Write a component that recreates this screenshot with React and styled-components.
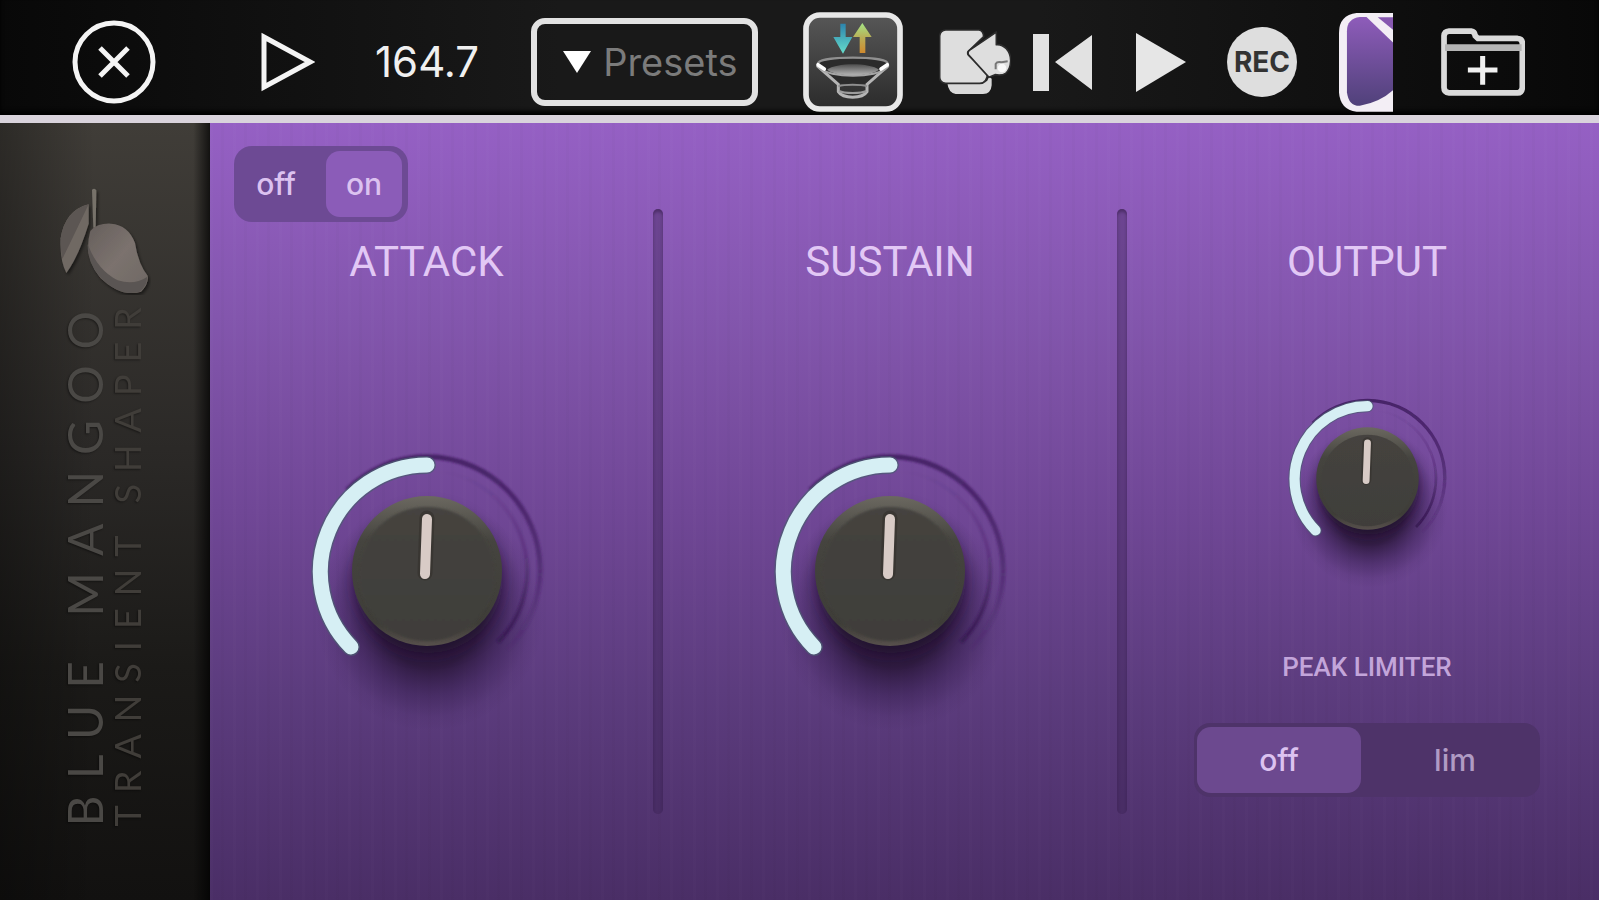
import { useState } from 'react';
import styled, { createGlobalStyle } from 'styled-components';

const CloseIcon = () => (
  <svg width="86" height="86" viewBox="0 0 86 86" fill="none" stroke="#f4f4f4" aria-hidden="true">
    <circle cx="43" cy="43" r="39" strokeWidth="5" />
    <path d="M29 29 57 57M57 29 29 57" strokeWidth="5" />
  </svg>
);

const PlayOutlineIcon = () => (
  <svg width="54" height="60" viewBox="0 0 54 60" fill="none" aria-hidden="true">
    <path d="M3 5 49 30 3 55Z" stroke="#f4f4f4" strokeWidth="5" />
  </svg>
);

const FunnelIcon = () => (
  <svg width="100" height="100" viewBox="912 35 300 300" fill="none" aria-hidden="true">
    <defs>
      <linearGradient id="tile" x1="0" y1="0" x2="0" y2="1">
        <stop offset="0" stopColor="#575757" />
        <stop offset="1" stopColor="#2b2b2b" />
      </linearGradient>
      <linearGradient id="down" x1="0" y1="0" x2="0" y2="1">
        <stop offset="0" stopColor="#2c84ad" />
        <stop offset="1" stopColor="#66dccb" />
      </linearGradient>
      <linearGradient id="up" x1="0" y1="0" x2="0" y2="1">
        <stop offset="0" stopColor="#a5e585" />
        <stop offset="0.5" stopColor="#b9ad55" />
        <stop offset="1" stopColor="#d08a2e" />
      </linearGradient>
      <linearGradient id="bowl" x1="0" y1="0" x2="0" y2="1">
        <stop offset="0" stopColor="#4d4d4d" />
        <stop offset="1" stopColor="#b4b4b4" />
      </linearGradient>
    </defs>
    <rect x="921" y="44" width="282" height="282" rx="42" fill="url(#tile)" stroke="#e8e8e8" strokeWidth="17" />
    <path d="M1024 70h16v40h20l-28 50-29-50h21Z" fill="url(#down)" />
    <path d="M1082 158h17v-48h19l-28-42-28 42h20Z" fill="url(#up)" />
    <path d="M957 194C945 168 1178 168 1166 194L1108 250H1016Z" fill="#2b2b2b" />
    <path d="M957 190C957 166 1166 166 1166 190" stroke="#909090" strokeWidth="7" />
    <path d="M984 208C1010 186 1114 186 1140 208C1116 230 1008 230 984 208Z" fill="url(#bowl)" />
    <path d="M954 196 1018 252V274C1032 296 1090 296 1104 274V252L1168 196" stroke="#b5b5b5" strokeWidth="9" />
    <path d="M960 202C990 234 1134 234 1164 202" stroke="#a6a6a6" strokeWidth="6" />
    <path d="M1018 258C1036 252 1086 252 1104 258" stroke="#8f8f8f" strokeWidth="6" />
    <path d="M1020 272C1036 280 1086 280 1102 272" stroke="#9c9c9c" strokeWidth="6" />
    <path d="M957 193 976 206M1165 193 1146 206" stroke="#fff" strokeWidth="11" strokeLinecap="round" />
  </svg>
);

const PluginIcon = () => (
  <svg width="72" height="66" viewBox="118 94 216 196" aria-hidden="true">
    <path d="M143 250H262L268 236 276 242V262Q274 288 250 288H168Q146 284 143 255Z" fill="#d9d9d9" />
    <path
      d="M138 96H238Q251 98 252 116L206 160Q202 165 206 171L264 226Q262 256 240 256H138Q120 254 120 238V114Q122 97 138 96Z"
      fill="#dedede"
      stroke="#2c2c2c"
      strokeWidth="5"
    />
    <path
      d="M290 102V140Q306 138 320 152Q334 168 333 190Q332 214 318 226Q306 234 286 230L268 238 208 172Q202 165 208 158Z"
      fill="#dedede"
      stroke="#2c2c2c"
      strokeWidth="5"
      strokeLinejoin="round"
    />
    <path d="M288 214V198Q292 190 306 193L324 190" fill="none" stroke="#777" strokeWidth="6" />
    <circle cx="307" cy="210" r="13" fill="#f8f8f8" />
  </svg>
);

const RewindIcon = () => (
  <svg width="60" height="60" viewBox="0 0 60 60" fill="#e2e2e2" aria-hidden="true">
    <path d="M0 2H16V59H0ZM59 3V58L22 30Z" />
  </svg>
);

const PlayIcon = () => (
  <svg width="52" height="60" viewBox="0 0 52 60" fill="#e6e6e6" aria-hidden="true">
    <path d="M1 1 51 30 1 60Z" />
  </svg>
);

const PluginSlotIcon = () => (
  <svg width="54" height="100" viewBox="417 35 163 300" aria-hidden="true">
    <defs>
      <linearGradient id="slot" x1="0" y1="0" x2="0" y2="1">
        <stop offset="0" stopColor="#8e5cba" />
        <stop offset="1" stopColor="#50417a" />
      </linearGradient>
    </defs>
    <path d="M580 37H470Q417 44 417 96V276Q420 328 470 335H580Z" fill="#f3eef5" />
    <path d="M480 49Q441 54 441 92V276Q446 318 480 317Q540 306 580 270V126L500 49Z" fill="url(#slot)" />
    <path d="M534 50H580V88Z" fill="#8758b0" />
  </svg>
);

const FolderIcon = () => (
  <svg width="84" height="68" viewBox="722 85 250 202" fill="none" aria-hidden="true">
    <path
      d="M746 94H812Q822 95 824 108L832 116H950Q964 117 964 130V262Q963 278 950 278H746Q731 277 731 262V108Q732 95 746 94Z"
      stroke="#dadada"
      strokeWidth="17"
    />
    <path d="M734 143H962" stroke="#b5b5b5" strokeWidth="20" />
    <path d="M846 168V254M802 210H890" stroke="#f0f0f0" strokeWidth="15" />
  </svg>
);

const MangoLogo = () => (
  <svg width="92" height="108" viewBox="174 230 276 324" aria-hidden="true">
    <defs>
      <linearGradient id="fruit" x1="0" y1="0" x2="1" y2="1">
        <stop offset="0" stopColor="#665f5c" />
        <stop offset="0.5" stopColor="#7b726e" />
        <stop offset="1" stopColor="#6e6863" />
      </linearGradient>
      <filter id="logoShadow" x="-20%" y="-20%" width="150%" height="150%">
        <feDropShadow dx="5" dy="7" stdDeviation="5" floodOpacity="0.5" />
      </filter>
    </defs>
    <g filter="url(#logoShadow)">
      <path d="M263 282V340Q232 440 196 488Q176 450 179 384Q192 300 263 282Z" fill="#706964" />
      <path d="M263 282Q192 300 179 384Q178 420 184 446Q226 360 263 282Z" fill="#5c5652" />
      <path d="M273 238Q281 232 286 240L284 352H277Z" fill="#77726b" />
      <path
        d="M268 362Q290 338 330 340Q382 344 402 398Q412 462 440 496Q444 520 420 544Q360 562 298 502Q246 440 268 362Z"
        fill="url(#fruit)"
      />
      <path d="M260 402Q290 480 350 510Q400 526 438 500Q440 526 416 544Q360 562 298 502Q258 456 260 402Z" fill="#5a5552" />
    </g>
  </svg>
);

const Knob = ({ label, size }) => {
  const [value, setValue] = useState(50);

  return (
    <KnobWrapper $size={size}>
      <svg width="100%" height="100%" viewBox="0 0 300 300" fill="none" aria-hidden="true">
        <defs>
          <linearGradient id="rim" x1="0" y1="0" x2="0" y2="1">
            <stop offset="0" stopColor="#6b6860" />
            <stop offset="0.3" stopColor="#45443f" />
            <stop offset="0.85" stopColor="#3e3d38" />
            <stop offset="1" stopColor="#57504c" />
          </linearGradient>
          <linearGradient id="cap" x1="0" y1="0" x2="0" y2="1">
            <stop offset="0" stopColor="#45433f" />
            <stop offset="1" stopColor="#3f3e3a" />
          </linearGradient>
          <linearGradient id="outerTrack" x1="0" y1="0" x2="0" y2="1">
            <stop offset="0" stopColor="#411d61" stopOpacity="0.9" />
            <stop offset="0.5" stopColor="#411d61" stopOpacity="0.6" />
            <stop offset="1" stopColor="#411d61" stopOpacity="0.05" />
          </linearGradient>
          <linearGradient id="innerTrack" x1="0" y1="0" x2="0" y2="1">
            <stop offset="0" stopColor="#34164f" stopOpacity="0" />
            <stop offset="0.5" stopColor="#34164f" stopOpacity="0.25" />
            <stop offset="1" stopColor="#34164f" stopOpacity="0.8" />
          </linearGradient>
          <radialGradient id="shadow">
            <stop offset="0" stopColor="#1c0d28" stopOpacity="0.95" />
            <stop offset="0.45" stopColor="#1f0f2b" stopOpacity="0.75" />
            <stop offset="0.7" stopColor="#25123a" stopOpacity="0.35" />
            <stop offset="0.88" stopColor="#25123a" stopOpacity="0.08" />
            <stop offset="1" stopColor="#25123a" stopOpacity="0" />
          </radialGradient>
          <filter id="nearBlur" x="-50%" y="-50%" width="200%" height="200%">
            <feGaussianBlur stdDeviation="8" />
          </filter>
          <filter id="soft" x="-10%" y="-10%" width="120%" height="120%">
            <feGaussianBlur stdDeviation="1" />
          </filter>
        </defs>
        <ellipse cx="153" cy="194" rx="114" ry="116" fill="url(#shadow)" />
        <ellipse cx="151" cy="160" rx="74" ry="72" fill="#1c0d28" opacity="0.6" filter="url(#nearBlur)" />
        <path d="M70 69A113 113 0 0 1 230 229" stroke="url(#outerTrack)" strokeWidth="5" filter="url(#soft)" />
        <path d="M150 49A101 101 0 0 1 221 221" stroke="url(#innerTrack)" strokeWidth="4" filter="url(#soft)" />
        <path d="M74 226A107 107 0 0 1 150 44" stroke="#4c5d72" strokeWidth="18" strokeLinecap="round" opacity="0.7" />
        <path d="M74 226A107 107 0 0 1 150 44" stroke="#d6eff4" strokeWidth="15" strokeLinecap="round" />
        <circle cx="150" cy="150" r="75" fill="url(#rim)" />
        <ellipse cx="150" cy="153" rx="68" ry="67" fill="url(#cap)" filter="url(#soft)" />
        <path d="M150 97 148 152" stroke="#2f2b28" strokeWidth="15" strokeLinecap="round" opacity="0.5" />
        <path d="M150 98 148 153" stroke="#d8cbc6" strokeWidth="10" strokeLinecap="round" />
      </svg>
      <KnobInput
        type="range"
        aria-label={label}
        value={value}
        onChange={(e) => setValue(Number(e.target.value))}
      />
    </KnobWrapper>
  );
};

const App = () => {
  const [power, setPower] = useState('on');
  const [limiter, setLimiter] = useState('off');

  return (
    <Page>
      <GlobalStyle />
      <Toolbar>
        <Group>
          <IconButton aria-label="Close"><CloseIcon /></IconButton>
          <IconButton aria-label="Preview" $gap={104}><PlayOutlineIcon /></IconButton>
          <Tempo>164.7</Tempo>
          <PresetBox>
            <svg width="28" height="22" viewBox="0 0 28 22" fill="#fff" aria-hidden="true">
              <path d="M0 0H28L14 22Z" />
            </svg>
            <PresetSelect aria-label="Presets">
              <option>Presets</option>
            </PresetSelect>
          </PresetBox>
        </Group>
        <Group>
          <IconButton aria-label="Routing"><FunnelIcon /></IconButton>
          <IconButton aria-label="Plugins" $gap={36}><PluginIcon /></IconButton>
          <IconButton aria-label="Back to start" $gap={22}><RewindIcon /></IconButton>
          <IconButton aria-label="Play" $gap={42}><PlayIcon /></IconButton>
          <RecordButton>REC</RecordButton>
          <IconButton aria-label="Plugin slot" $gap={42}><PluginSlotIcon /></IconButton>
          <IconButton aria-label="Add folder" $gap={48}><FolderIcon /></IconButton>
        </Group>
      </Toolbar>

      <Body>
        <Sidebar>
          <MangoLogo />
          <Brand>
            <BrandName>BLUE MANGOO</BrandName>
            <ProductName>TRANSIENT SHAPER</ProductName>
          </Brand>
        </Sidebar>

        <Panel>
          <Column $right={10}>
            <ColumnTop>
              <Switch aria-label="Power">
                {['off', 'on'].map((item) => (
                  <Option key={item} $active={power === item} $tone="#8b5cb8">
                    <input type="radio" name="power" checked={power === item} onChange={() => setPower(item)} />
                    {item}
                  </Option>
                ))}
              </Switch>
            </ColumnTop>
            <Title>ATTACK</Title>
            <KnobArea>
              <Knob label="Attack" size={300} />
            </KnobArea>
          </Column>
          <Divider />
          <Column>
            <ColumnTop />
            <Title>SUSTAIN</Title>
            <KnobArea>
              <Knob label="Sustain" size={300} />
            </KnobArea>
          </Column>
          <Divider />
          <Column $left={8}>
            <ColumnTop />
            <Title>OUTPUT</Title>
            <SmallKnobArea>
              <Knob label="Output" size={205} />
            </SmallKnobArea>
            <Caption id="limiter">PEAK LIMITER</Caption>
            <WideSwitch aria-labelledby="limiter">
              {['off', 'lim'].map((item) => (
                <Option key={item} $active={limiter === item} $tone="#6c498f" $dim={limiter !== item}>
                  <input type="radio" name="limiter" checked={limiter === item} onChange={() => setLimiter(item)} />
                  {item}
                </Option>
              ))}
            </WideSwitch>
          </Column>
        </Panel>
      </Body>
    </Page>
  );
}

export default App;


const GlobalStyle = createGlobalStyle`
  * {
    box-sizing: border-box;
  }

  body {
    margin: 0;
    background: #111;
    font-family: Inter, "Liberation Sans", sans-serif;
  }
`;

const Page = styled.div`
  display: flex;
  flex-direction: column;
  min-height: 100vh;
`;

const Toolbar = styled.header`
  display: flex;
  justify-content: space-between;
  align-items: center;
  height: 123px;
  padding: 0 74px 0 71px;
  background: linear-gradient(90deg, #080808, #191919 35%, #191919 65%, #080808);
  border-bottom: 8px solid #d9d3dc;
  box-shadow: inset 0 -4px 4px #000;
`;

const Group = styled.div`
  display: flex;
  align-items: center;
  padding-top: 8px;
`;

const IconButton = styled.button`
  display: flex;
  margin: 0 0 0 ${(props) => props.$gap || 0}px;
  padding: 0;
  border: none;
  background: none;
  cursor: pointer;
`;

const Tempo = styled.span`
  margin-left: 60px;
  color: #f0f0f0;
  font-size: 42px;
  line-height: 56px;
`;

const PresetBox = styled.label`
  display: flex;
  align-items: center;
  gap: 12px;
  height: 88px;
  margin-left: 52px;
  padding: 0 14px 0 26px;
  border: 6px solid #e2e2e2;
  border-radius: 14px;
`;

const PresetSelect = styled.select`
  appearance: none;
  padding: 0;
  border: none;
  background: none;
  color: #7b7b7b;
  font-family: inherit;
  font-size: 38px;
  line-height: 48px;
`;

const RecordButton = styled.button`
  width: 70px;
  height: 70px;
  margin: 0 0 0 40px;
  padding: 0;
  border: none;
  border-radius: 50%;
  background: #dedede;
  color: #333;
  font-family: inherit;
  font-size: 28px;
  font-weight: 700;
`;

const Body = styled.main`
  display: flex;
  flex: 1;
`;

const Sidebar = styled.aside`
  display: flex;
  flex-direction: column;
  align-items: center;
  flex: none;
  width: 210px;
  padding-top: 64px;
  background:
    linear-gradient(90deg, rgba(0, 0, 0, 0.3), transparent 45%, transparent 92%, rgba(0, 0, 0, 0.7)),
    linear-gradient(#403d38, #2b2927 42%, #1b1a18 70%, #121110);
`;

const Brand = styled.div`
  writing-mode: vertical-rl;
  transform: rotate(180deg);
  font-family: Lato, "Liberation Sans", sans-serif;
  text-shadow: -1px -1px 2px rgba(0, 0, 0, 0.4);
`;

const BrandName = styled.div`
  color: #4a4845;
  font-size: 48px;
  line-height: 44px;
  letter-spacing: 16px;
  white-space: nowrap;
`;

const ProductName = styled.div`
  color: #403d39;
  font-size: 36px;
  line-height: 40px;
  letter-spacing: 12px;
  white-space: nowrap;
`;

const Panel = styled.section`
  display: grid;
  grid-template-columns: 443fr 10px 454fr 10px 472fr;
  flex: 1;
  background:
    repeating-linear-gradient(90deg, rgba(255, 255, 255, 0.012) 0 3px, transparent 3px 11px, rgba(0, 0, 0, 0.015) 11px 14px, transparent 14px 23px),
    linear-gradient(#9560c4, #8356ad 25%, #704796 50%, #5c3c7e 73%, #4a2e66);
`;

const Column = styled.div`
  display: flex;
  flex-direction: column;
  align-items: center;
  padding: 0 ${(props) => props.$right || 0}px 0 ${(props) => props.$left || 0}px;
`;

const ColumnTop = styled.div`
  align-self: stretch;
  height: 111px;
  padding: 23px 24px 0;
`;

const Divider = styled.div`
  margin: 86px 0;
  border-radius: 5px;
  background: rgba(60, 35, 85, 0.4);
  box-shadow: inset 0 3px 3px rgba(50, 25, 70, 0.5);
`;

const Title = styled.h2`
  margin: 0;
  color: #e2c8f5;
  font-family: Roboto, "Liberation Sans", sans-serif;
  font-size: 42px;
  font-weight: 400;
  line-height: 56px;
`;

const KnobArea = styled.div`
  padding-top: 131px;
`;

const SmallKnobArea = styled.div`
  padding-top: 86px;
`;

const KnobWrapper = styled.div`
  position: relative;
  width: ${(props) => props.$size}px;
  height: ${(props) => props.$size}px;

  svg {
    display: block;
    overflow: visible;
  }
`;

const KnobInput = styled.input`
  position: absolute;
  inset: 0;
  width: 100%;
  height: 100%;
  margin: 0;
  opacity: 0;
  cursor: pointer;
`;

const Switch = styled.div.attrs({ role: 'radiogroup' })`
  display: grid;
  grid-template-columns: 84px 76px;
  gap: 8px;
  width: 174px;
  height: 76px;
  padding: 5px 6px 5px 0;
  border-radius: 18px;
  background: #6d4a94;
`;

const WideSwitch = styled(Switch)`
  grid-template-columns: 1fr 1fr;
  gap: 12px;
  width: 346px;
  height: 74px;
  padding: 4px 3px;
  border-radius: 16px;
  background: #4e3369;
`;

const Option = styled.label`
  position: relative;
  display: flex;
  align-items: center;
  justify-content: center;
  border-radius: 14px;
  background: ${(props) => (props.$active ? props.$tone : 'transparent')};
  color: ${(props) => (props.$dim ? '#b09bc4' : '#dcc2f0')};
  font-size: 30px;
  font-weight: 500;
  line-height: 40px;
  cursor: pointer;

  input {
    position: absolute;
    inset: 0;
    margin: 0;
    opacity: 0;
  }
`;

const Caption = styled.div`
  margin-top: 70px;
  margin-bottom: 40px;
  color: #c3a5da;
  font-family: Roboto, "Liberation Sans", sans-serif;
  font-size: 26px;
  font-weight: 500;
  line-height: 32px;
`;
